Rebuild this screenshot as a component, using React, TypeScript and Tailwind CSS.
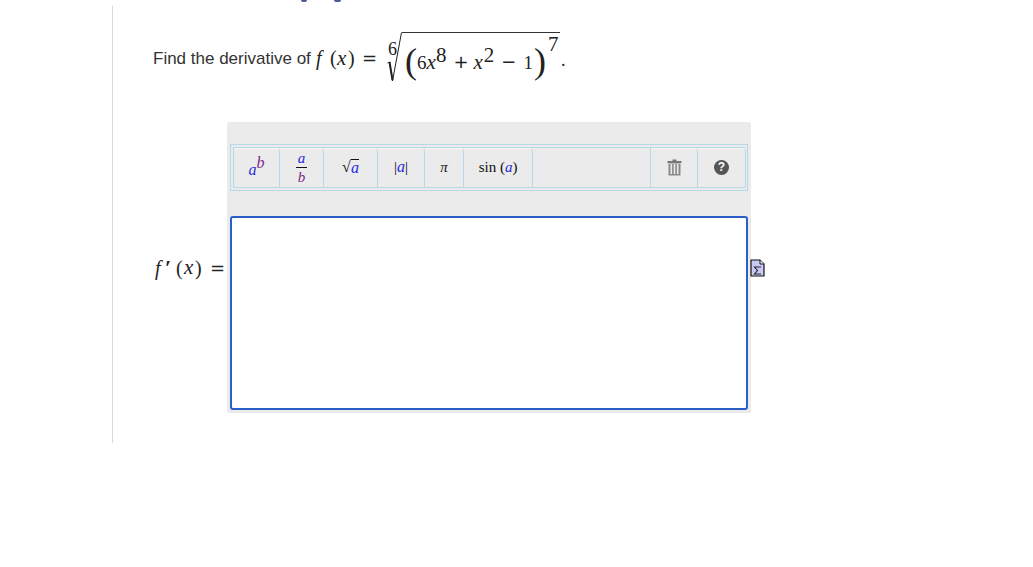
const serif = "font-['Liberation_Serif',serif]"
const sign = "font-['DejaVu_Sans',sans-serif]"

// Boton de la barra del editor
function ToolButton({ width, children, rounded = true }: { width: string; children?: React.ReactNode; rounded?: boolean }) {
  return (
    <div className={`${width} flex h-full shrink-0 items-center justify-center border-r border-[#b5d9e6] pb-[2px] ${rounded ? "rounded-tl-[4px] rounded-tr-[4px] border-t border-t-[#f5f5f5]" : ""} ${serif} text-[15px] text-[#111]`}>
      {children}
    </div>
  )
}

function TrashIcon() {
  return (
    <svg width="15" height="17" viewBox="0 0 15 17">
      <path d="M5.5 0.5h4v1.5h-4z" fill="#777" />
      <rect x="0.5" y="2" width="14" height="2" fill="#777" />
      <path d="M1.5 4.5h12V16.5h-12z" fill="#8a8a8a" />
      <rect x="3.5" y="5" width="1.6" height="10" fill="#ebebeb" />
      <rect x="6.7" y="5" width="1.6" height="10" fill="#ebebeb" />
      <rect x="9.9" y="5" width="1.6" height="10" fill="#ebebeb" />
    </svg>
  )
}

function FileSigmaIcon() {
  return (
    <svg width="15" height="18" viewBox="0 0 15 18">
      <path d="M1 1h9l4 4v12H1z" fill="#c9c9f5" stroke="#111" strokeWidth="1.2" />
      <path d="M10 1v4h4" fill="#fff" stroke="#111" strokeWidth="1" />
      <path d="M11 8H4.5l3 3.5-3 3.5H11" fill="none" stroke="#222" strokeWidth="1.1" />
    </svg>
  )
}

export default function App() {
  return (
    <div className="relative h-[567px] w-[1033px] overflow-hidden bg-white pt-[6px] pl-[112px] font-['Liberation_Sans',sans-serif] text-[#333]">
      {/* Restos del titulo cortado arriba */}
      <div className="absolute top-0 left-[301px] h-[2px] w-[6px] rounded-b-full bg-[#4a5a96]" />
      <div className="absolute top-0 left-[334px] h-[2px] w-[7px] rounded-b-full bg-[#4a5a96]" />

      <div className="h-[437px] border-l border-[#d9d9d9] pl-[40px]">
        {/* Enunciado */}
        <div className="flex h-[116px] items-start">
          <div className="mt-[26px] flex h-[52px] items-center">
            <span className="mt-[1px] w-[163px] text-[17px] leading-none">Find the derivative of</span>
            <div className={`${serif} flex items-center text-[20px] leading-none text-[#222]`}>
              <i className="w-[13px]">f</i>
              <span className="ml-[1px] w-[7px]">(</span>
              <i className="w-[11px] text-[21px]">x</i>
              <span className="w-[7px]">)</span>
              <span className={`${sign} ml-[7px] text-[18px]`}>=</span>
            </div>
            <div className={`${serif} ml-[10px] flex h-[52px] items-start text-[#222]`}>
              <div className="relative h-[52px] w-[15px]">
                <span className="absolute top-[8px] left-[1px] text-[18px] leading-none">6</span>
                <svg className="absolute top-0 left-0" width="15" height="52" viewBox="0 0 15 52">
                  <path d="M0.5 31l2-1 3 19L14.5 0.5" fill="none" stroke="#222" strokeWidth="1" />
                  <path d="M2.5 30l3 18" fill="none" stroke="#222" strokeWidth="2" />
                </svg>
              </div>
              <div className="flex h-[52px] w-[158px] items-center border-t border-[#333] pl-[3px]">
                <span className="mt-[5px] w-[12px] text-[36px] leading-none">(</span>
                <span className="mt-[7px] text-[19px] leading-none">
                  6<i className="text-[21px]">x</i>
                </span>
                <span className="mb-[6px] text-[21px] leading-none">8</span>
                <span className={`${sign} mt-[7px] ml-[7px] text-[18px] leading-none`}>+</span>
                <i className="mt-[7px] ml-[5px] text-[21px] leading-none">x</i>
                <span className="mb-[6px] ml-[1px] text-[21px] leading-none">2</span>
                <span className={`${sign} mt-[7px] ml-[7px] text-[18px] leading-none`}>−</span>
                <span className="mt-[7px] ml-[7px] text-[19px] leading-none">1</span>
                <span className="mt-[5px] ml-[1px] w-[12px] text-[36px] leading-none">)</span>
                <span className="mb-[28px] ml-[2px] text-[21px] leading-none">7</span>
              </div>
              <span className="mt-[19px] ml-[1px] text-[18px] leading-none">.</span>
            </div>
          </div>
        </div>

        {/* Respuesta */}
        <div className="flex items-center">
          <div className={`${serif} flex w-[74px] shrink-0 items-center text-[20px] leading-none text-[#222]`}>
            <i className="w-[12px] pl-[2px]">f</i>
            <span className="w-[11px] text-[22px] font-bold">′</span>
            <span className="w-[8px]">(</span>
            <i className="w-[11px] text-[21px]">x</i>
            <span className="w-[7px]">)</span>
            <span className={`${sign} ml-[8px] text-[18px]`}>=</span>
          </div>
          <div className="h-[291px] w-[524px] shrink-0 rounded-[2px] bg-[#ebebeb] px-[3px] pt-[22px]">
            <div className="flex h-[47px] w-[518px] border border-[#b5d9e6] p-[2px]">
              <div className="flex h-full w-full border border-[#b5d9e6] border-r-0">
                <ToolButton width="w-[46px]">
                  <span className="mt-[6px] text-[16px] text-[#2a2ae0] italic">a</span>
                  <span className="mb-[8px] text-[16px] text-[#7b1f8a] italic">b</span>
                </ToolButton>
                <ToolButton width="w-[44px]">
                  <span className="flex flex-col items-center text-[15px] leading-[14px] italic">
                    <span className="border-b border-[#111] px-[2px] pb-[2px] text-[#2a2ae0]">a</span>
                    <span className="pt-[2px] text-[#7b1f8a]">b</span>
                  </span>
                </ToolButton>
                <ToolButton width="w-[54px]">
                  <span className="text-[16px]">√</span>
                  <span className="border-t border-[#111] text-[16px] leading-[15px] text-[#2a2ae0] italic">a</span>
                </ToolButton>
                <ToolButton width="w-[47px]">
                  <span>|</span>
                  <span className="text-[16px] text-[#2a2ae0] italic">a</span>
                  <span>|</span>
                </ToolButton>
                <ToolButton width="w-[39px]">
                  <i>π</i>
                </ToolButton>
                <ToolButton width="w-[69px]">
                  <span className="whitespace-pre">
                    sin (<i className="text-[#2a2ae0]">a</i>)
                  </span>
                </ToolButton>
                <ToolButton width="w-[118px]" rounded={false} />
                <ToolButton width="w-[47px]">
                  <TrashIcon />
                </ToolButton>
                <ToolButton width="w-[48px]">
                  <span className="flex h-[15px] w-[15px] items-center justify-center rounded-full bg-[#555] font-['Liberation_Sans',sans-serif] text-[12px] font-bold text-white">
                    ?
                  </span>
                </ToolButton>
              </div>
            </div>
            <div className="mt-[25px] h-[194px] w-[518px] rounded-[3px] border-2 border-[#2a5fc9] bg-white" />
          </div>
          <div className="ml-[-1px] flex shrink-0">
            <FileSigmaIcon />
          </div>
        </div>
      </div>
    </div>
  )
}
